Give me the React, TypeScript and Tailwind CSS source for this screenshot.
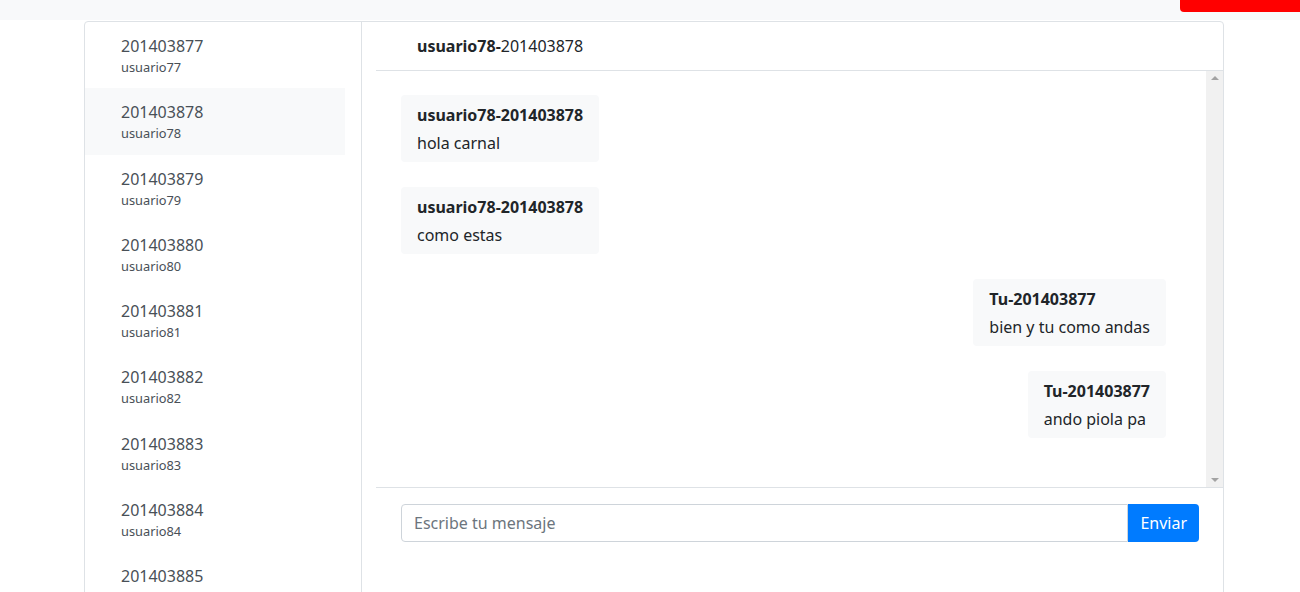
import { Fragment } from "react";

const contactos = [
  { id: "201403877", user: "usuario77" },
  { id: "201403878", user: "usuario78", active: true },
  { id: "201403879", user: "usuario79" },
  { id: "201403880", user: "usuario80" },
  { id: "201403881", user: "usuario81" },
  { id: "201403882", user: "usuario82" },
  { id: "201403883", user: "usuario83" },
  { id: "201403884", user: "usuario84" },
  { id: "201403885", user: "usuario85" },
];

const mensajes = [
  { from: "usuario78-201403878", text: "hola carnal", mine: false },
  { from: "usuario78-201403878", text: "como estas", mine: false },
  { from: "Tu-201403877", text: "bien y tu como andas", mine: true },
  { from: "Tu-201403877", text: "ando piola pa", mine: true },
];

const Contacto = (props: any) => {
  return (
    <div
      className={`px-9 py-3 ${props.active ? "bg-[#f8f9fa]" : ""}`}
    >
      <p className="text-base leading-6 text-[#495057]">{props.id}</p>
      <p className="text-[12.8px] leading-[18.3px] text-[#495057]">{props.user}</p>
    </div>
  );
};

const Burbuja = (props: any) => {
  return (
    <div className={`flex ${props.mine ? "justify-end" : "justify-start"}`}>
      <div className="bg-[#f8f9fa] rounded px-4 pt-2 pb-[7px]">
        <p className="font-bold leading-6 mb-1 text-[#212529]">{props.from}</p>
        <p className="leading-6 text-[#212529]">{props.text}</p>
      </div>
    </div>
  );
};

export default function App() {
  return (
    <div className="h-[592px] overflow-hidden bg-white font-['Noto_Sans','Open_Sans',sans-serif] text-[#212529]">
      {/* navbar, casi fuera de la vista */}
      <nav className="h-5 bg-[#f8f9fa] flex justify-end">
        <div className="w-[120px] h-3 bg-[#ff0000] rounded-bl" />
      </nav>

      <div className="ml-[84px] w-[1140px] mt-px border border-[#dee2e6] rounded flex h-[600px]">
        {/* lista de contactos */}
        <div className="w-[277px] shrink-0 border-r border-[#dee2e6] pr-4">
          {contactos.map((c) => (
            <Fragment key={c.id}>
              <Contacto {...c} />
            </Fragment>
          ))}
        </div>

        {/* chat */}
        <div className="flex-1 flex flex-col pl-[14px]">
          <div className="pl-[41px] py-3 border-b border-[#dee2e6] leading-6 text-[#212529]">
            <span className="font-bold">usuario78-</span>201403878
          </div>

          <div className="h-[416px] flex">
            <div className="flex-1 pt-6 pl-[25px] pr-[40px] flex flex-col gap-[25px]">
              {mensajes.map((m, i) => (
                <Burbuja key={i} {...m} />
              ))}
            </div>
            <div className="w-[17px] bg-[#f1f1f1] flex flex-col justify-between items-center py-[5px]">
              <div className="w-0 h-0 border-l-4 border-r-4 border-b-4 border-l-transparent border-r-transparent border-b-[#a3a3a3]" />
              <div className="w-0 h-0 border-l-4 border-r-4 border-t-4 border-l-transparent border-r-transparent border-t-[#a3a3a3]" />
            </div>
          </div>

          <div className="border-t border-[#dee2e6] pt-4 pl-[25px] pr-6 flex">
            <input
              className="flex-1 h-[38px] border border-[#ced4da] rounded-l px-3 text-base text-[#495057] placeholder:text-[#6c757d] outline-none"
              placeholder="Escribe tu mensaje"
            />
            <button className="h-[38px] px-3 bg-[#007bff] text-white rounded-r text-base">
              Enviar
            </button>
          </div>
        </div>
      </div>
    </div>
  );
}
